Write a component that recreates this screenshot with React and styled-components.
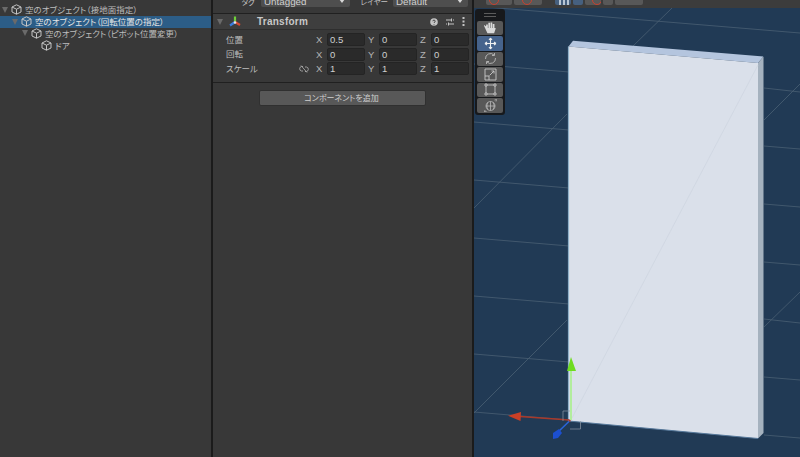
import React from 'react';
import styled, { createGlobalStyle } from 'styled-components';

const Global = createGlobalStyle`
  html, body { margin: 0; padding: 0; background: #383838; }
  body { font-family: "Liberation Sans", "Noto Sans CJK JP", sans-serif; overflow: hidden; }
`;

const Page = styled.div`
  width: 800px;
  height: 457px;
  display: grid;
  grid-template-columns: 211px 2px 259px 2px 326px;
  overflow: hidden;
  background: #383838;
`;

const Divider = styled.div`
  background: #1b1b1b;
`;

/* hierarchy */
const Hierarchy = styled.div`
  padding-top: 4px;
  background: #383838;
`;

const TreeRow = styled.div`
  height: 11.8px;
  display: flex;
  align-items: center;
  gap: 3px;
  padding-left: ${(p) => p.$indent * 10 + 2}px;
  background: ${(p) => (p.$selected ? '#2c5d87' : 'transparent')};
  color: ${(p) => (p.$selected ? '#e4e4e4' : '#bcbcbc')};
  font-size: 8.5px;
  font-feature-settings: "palt";
  white-space: nowrap;
`;

const TreeText = styled.span`
  position: relative;
  top: -0.5px;
`;

const Arrow = styled.span`
  width: 0;
  height: 0;
  border-left: 3px solid transparent;
  border-right: 3px solid transparent;
  border-top: 6px solid ${(p) => (p.$hidden ? 'transparent' : '#6a6a6a')};
  flex: none;
`;

const Cube = () => (
  <svg width="11" height="11" viewBox="0 0 11 11" fill="none" stroke="#c4c4c4" strokeWidth="1" style={{ flex: 'none' }}>
    <path d="M5.5 .8 10 3v5l-4.500 2.200L1 8V3zM1 3l4.500 2.200L10 3M5.500 5.200v5" />
  </svg>
);

/* inspector */
const Inspector = styled.div`
  display: flex;
  flex-direction: column;
  background: #383838;
  color: #c2c2c2;
  font-size: 9px;
`;

const TagRow = styled.div`
  height: 13px;
  flex: none;
  display: flex;
  align-items: flex-end;
  overflow: hidden;
  border-bottom: 1px solid #202020;
  box-sizing: content-box;
`;

const TagLabel = styled.span`
  width: ${(p) => p.$w}px;
  text-align: right;
  padding-right: ${(p) => p.$pad}px;
  box-sizing: border-box;
  flex: none;
  position: relative;
  top: -6px;
  font-size: 7.5px;
  font-feature-settings: "palt";
`;

const TagSelect = styled.div`
  width: ${(p) => p.$w}px;
  height: 14px;
  margin-bottom: 6px;
  flex: none;
  display: flex;
  justify-content: space-between;
  align-items: center;
  padding: 2px 5px 0 3px;
  box-sizing: border-box;
  background: #4e4e4e;
  border-radius: 2px;
  color: #d0d0d0;
  font-size: 9.8px;
`;

const CaretDown = styled.span`
  width: 0;
  height: 0;
  border-left: 3px solid transparent;
  border-right: 3px solid transparent;
  border-top: 4px solid #d8d8d8;
`;

const ComponentHeader = styled.div`
  height: 16px;
  flex: none;
  display: flex;
  align-items: center;
  padding: 0 6px 0 4px;
  box-sizing: border-box;
  background: #3e3e3e;
  border-bottom: 1px solid #2e2e2e;
`;

const HeaderTitle = styled.span`
  margin-left: 15px;
  flex: 1;
  font-size: 10px;
  font-weight: bold;
  letter-spacing: 0.25px;
  color: #c8c8c8;
`;

const HeaderIcons = styled.div`
  display: flex;
  align-items: center;
  gap: 7.5px;
`;

const TransformBody = styled.div`
  height: 53px;
  flex: none;
  padding-top: 3px;
  display: flex;
  flex-direction: column;
  gap: 1.7px;
  box-sizing: border-box;
  border-bottom: 1px solid #202020;
`;

const PropRow = styled.div`
  height: 13px;
  display: flex;
  align-items: center;
  padding-left: 13px;
`;

const PropLabel = styled.span`
  width: 73px;
  flex: none;
  padding-bottom: 2px;
  font-size: 8.5px;
  font-feature-settings: "palt";
  color: #bdbdbd;
`;

const LinkSlot = styled.span`
  width: 17px;
  flex: none;
  display: flex;
  align-items: center;
`;

const Axis = styled.span`
  width: 11px;
  flex: none;
  font-size: 9.5px;
  color: #b4b4b4;
`;

const Field = styled.span`
  width: 38px;
  height: 13px;
  flex: none;
  margin-right: 3px;
  padding-left: 2px;
  box-sizing: border-box;
  display: flex;
  align-items: center;
  background: #2a2a2a;
  border: 1px solid #242424;
  border-radius: 2px;
  font-size: 9.5px;
  color: #cfcfcf;
`;

const AddRow = styled.div`
  display: flex;
  justify-content: center;
  padding-top: 7px;
`;

const AddButton = styled.div`
  width: 167px;
  height: 16px;
  padding: 0 2px 2px 0;
  display: flex;
  align-items: center;
  justify-content: center;
  background: #585858;
  border: 1px solid #303030;
  border-radius: 2px;
  box-sizing: border-box;
  font-size: 8px;
  font-feature-settings: "palt";
  color: #cfcfcf;
`;

/* scene */
const Scene = styled.div`
  display: flex;
  flex-direction: column;
  position: relative;
  overflow: hidden;
`;

const SceneTop = styled.div`
  height: 8px;
  flex: none;
  background: #3c3c3c;
  display: flex;
  align-items: flex-start;
  gap: 2px;
  padding-left: 12px;
`;

const TopButton = styled.div`
  width: ${(p) => p.$w}px;
  height: 5px;
  flex: none;
  margin-left: ${(p) => p.$gap || 0}px;
  padding-left: 2px;
  box-sizing: border-box;
  overflow: hidden;
  background: ${(p) => (p.$on ? '#46607f' : '#585858')};
  border-radius: 0 0 2px 2px;
`;

const RedRing = styled.span`
  display: block;
  width: 8px;
  height: 8px;
  margin: -5px 0 0 ${(p) => p.$left}px;
  border: 1px solid #c9412f;
  border-radius: 50%;
`;

const WhiteBars = styled.span`
  display: block;
  width: 10px;
  height: 5px;
  margin-left: 2px;
  background: repeating-linear-gradient(90deg, #b9c6d4 0 2px, transparent 2px 4px);
`;

const Canvas = styled.div`
  flex: 1;
  background: #213a55;
`;

const ToolStrip = styled.div`
  position: absolute;
  left: 1px;
  top: 9px;
  width: 30px;
  padding: 11.5px 0 2px;
  box-sizing: border-box;
  background: #17191c;
  border-radius: 3px;
  display: flex;
  flex-direction: column;
  align-items: center;
  gap: 1px;
`;

const Grip = styled.span`
  position: absolute;
  top: 4px;
  left: 9px;
  width: 12px;
  height: 4px;
  border-top: 1px solid #5c5c5c;
  border-bottom: 1px solid #5c5c5c;
  box-sizing: border-box;
`;

const Tool = styled.div`
  width: 26.5px;
  height: 14.5px;
  display: flex;
  align-items: center;
  justify-content: center;
  background: ${(p) => (p.$on ? '#46638c' : '#585858')};
  border-radius: 2px;
`;

const tools = [
  { d: 'M3 7.500 3 3.500M5.200 7 5.200 1.800M7.400 7 7.400 1.500M9.600 7.500 9.600 3M3 7 1.500 6 4 11.500H9.500L11 7', w: 1.7, c: '#dadada', fill: '#dadada' },
  { d: 'M6.500 1V12M1 6.500H12M6.500 1 5 3M6.500 1 8 3M6.500 12 5 10M6.500 12 8 10M1 6.500 3 5M1 6.500 3 8M12 6.500 10 5M12 6.500 10 8', w: 1.1, c: '#f0f0f0', fill: 'none' },
  { d: 'M1.500 7A5 5 0 0 1 10 3M11.500 6A5 5 0 0 1 3 10M10.500 1V3.500H8M2.500 12V9.500H5', w: 0.9, c: '#b8b8b8', fill: 'none' },
  { d: 'M1 1H12V12H1ZM1 8H5V12M5.500 7.500 10 3M7.500 3H10V5.500', w: 0.9, c: '#c8c8c8', fill: 'none' },
  { d: 'M3 2H10M3 11H10M2 3V10M11 3V10M1 1H3V3H1ZM10 1H12V3H10ZM1 10H3V12H1ZM10 10H12V12H10Z', w: 0.8, c: '#d0d0d0', fill: 'none' },
  { d: 'M6.500 2.500A4.500 4.500 0 1 0 6.510 2.500M2 7H11M6.500 2.500V11.500M4 3.200C2.500 5.500 2.500 8.500 4 10.800M9 3.200C10.500 5.500 10.500 8.500 9 10.800M10.500 1 12.500 .5 12 2.500M2.500 12.500 .5 13 1 11', w: 0.75, c: '#bcbcbc', fill: 'none' },
];

const gridLines = [
  'M474 6 800 33',
  'M474 64 569 72',
  'M764 88 800 92',
  'M474 122 569 130',
  'M764 146 800 149',
  'M474 180 569 188',
  'M764 204 800 207',
  'M474 238 569 246',
  'M764 262 800 265',
  'M474 296 569 304',
  'M764 319 800 323',
  'M474 354 569 362',
  'M764 377 800 380',
  'M474 412 569 420',
  'M764 435 800 438',
  'M672 8 632 47',
  'M567 114 474 208',
  'M800 84 764 120',
  'M567 320 474 413',
  'M800 292 764 327',
];

const SceneDrawing = () => (
  <svg width="326" height="449" viewBox="474 8 326 449" style={{ display: 'block' }}>
    <g stroke="#4a5f74" strokeWidth="0.8" fill="none">
      {gridLines.map((d) => (
        <path key={d} d={d} />
      ))}
    </g>
    <polygon points="568.500,46.500 573,40.700 763.500,56.500 758,63" fill="#b4c5de" />
    <polygon points="758,63 763.500,56.500 763.500,433 758,438.500" fill="#a5b2bf" />
    <polygon points="568.500,46.500 758,63 758,438.500 568.500,421" fill="#dae0ea" />
    <path d="M568.500 46.500V421" stroke="#8fb0c8" strokeWidth="1.200" />
    <path d="M568.500 421 758 438.500" stroke="#56789a" strokeWidth="1.200" />
    <path d="M758 65 572 418" stroke="#cdd4e0" strokeWidth="0.7" />
    <path d="M571 420V370" stroke="#a8f08a" strokeWidth="1.600" />
    <polygon points="571,357 576,371 567,371" fill="#6fdc20" />
    <path d="M569.500 420 520 416.500" stroke="#a8392a" strokeWidth="1.500" />
    <polygon points="508,415.700 521,412 520.500,421" fill="#c93f26" />
    <path d="M569.500 421 557 433" stroke="#2a64d8" strokeWidth="1.600" />
    <polygon points="553,439 553,433 559,429 562,433 558,438" fill="#1c4fd0" />
    <path d="M563 421V411H570M580.500 421V429H570" stroke="#8e9aa8" strokeWidth="0.7" fill="none" />
    <circle cx="569.700" cy="420.700" r="1" fill="#a8392a" />
  </svg>
);

const tree = [
  { text: '空のオブジェクト（接地面指定）', indent: 0, arrow: true },
  { text: '空のオブジェクト（回転位置の指定）', indent: 1, arrow: true, selected: true },
  { text: '空のオブジェクト（ピボット位置変更）', indent: 2, arrow: true },
  { text: 'ドア', indent: 3 },
];

const props = [
  { label: '位置', v: ['0.5', '0', '0'] },
  { label: '回転', v: ['0', '0', '0'] },
  { label: 'スケール', v: ['1', '1', '1'], link: true },
];

export default function App() {
  return (
    <Page>
      <Global />
      <Hierarchy>
        {tree.map((row) => (
          <TreeRow key={row.text} $indent={row.indent} $selected={row.selected}>
            <Arrow $hidden={!row.arrow} />
            <Cube />
            <TreeText>{row.text}</TreeText>
          </TreeRow>
        ))}
      </Hierarchy>
      <Divider />
      <Inspector>
        <TagRow>
          <TagLabel $w={48} $pad={6}>タグ</TagLabel>
          <TagSelect $w={89}>Untagged<CaretDown /></TagSelect>
          <TagLabel $w={43} $pad={5}>レイヤー</TagLabel>
          <TagSelect $w={75}>Default<CaretDown /></TagSelect>
        </TagRow>
        <ComponentHeader>
          <Arrow />
          <svg width="14" height="14" viewBox="0 0 14 14" style={{ marginLeft: 5 }}>
            <path d="M7 7V1.500" stroke="#6fd13a" strokeWidth="2.200" />
            <path d="M7 7 2 10.500" stroke="#3a7de0" strokeWidth="2.200" />
            <path d="M7 7l5 3" stroke="#d9482f" strokeWidth="2.200" />
            <circle cx="7" cy="7.500" r="1.300" fill="#e8e8e8" />
          </svg>
          <HeaderTitle>Transform</HeaderTitle>
          <HeaderIcons>
            <svg width="8" height="8" viewBox="0 0 8 8">
              <circle cx="4" cy="4" r="3.800" fill="#c4c4c4" />
              <path d="M2.800 3.200c0-1.500 2.400-1.500 2.400 0 0 1-1.200 1-1.200 1.800M4 6v.6" stroke="#3e3e3e" fill="none" />
            </svg>
            <svg width="8" height="8" viewBox="0 0 8 8" stroke="#c4c4c4" fill="none">
              <path d="M0 2h5M7 2h1M0 6h1M3 6h5M5.500 .5v3M2.500 4.500v3" />
            </svg>
            <svg width="5" height="9" viewBox="0 0 5 9" fill="#c4c4c4">
              <rect x="1.500" y="0" width="2" height="2" />
              <rect x="1.500" y="3.500" width="2" height="2" />
              <rect x="1.500" y="7" width="2" height="2" />
            </svg>
          </HeaderIcons>
        </ComponentHeader>
        <TransformBody>
          {props.map((p) => (
            <PropRow key={p.label}>
              <PropLabel>{p.label}</PropLabel>
              <LinkSlot>
                {p.link && (
                  <svg width="10" height="8" viewBox="0 0 10 8" fill="none" stroke="#a8a8a8" strokeWidth="0.9">
                    <path d="M4 1.500H2.500a2.300 2.300 0 0 0 0 4.500H4M6 2h1.500a2.300 2.300 0 0 1 0 4.500H6M2 .5l6 7" />
                  </svg>
                )}
              </LinkSlot>
              {['X', 'Y', 'Z'].map((axis, i) => (
                <React.Fragment key={axis}>
                  <Axis>{axis}</Axis>
                  <Field>{p.v[i]}</Field>
                </React.Fragment>
              ))}
            </PropRow>
          ))}
        </TransformBody>
        <AddRow>
          <AddButton>コンポーネントを追加</AddButton>
        </AddRow>
      </Inspector>
      <Divider />
      <Scene>
        <SceneTop>
          <TopButton $w={26}><RedRing $left={1} /></TopButton>
          <TopButton $w={28}><RedRing $left={6} /></TopButton>
          <TopButton $w={16} $gap={11} $on><WhiteBars /></TopButton>
          <TopButton $w={10} $on />
          <TopButton $w={16}><RedRing $left={5} /></TopButton>
          <TopButton $w={10} />
          <TopButton $w={28} />
        </SceneTop>
        <Canvas>
          <SceneDrawing />
        </Canvas>
        <ToolStrip>
          <Grip />
          {tools.map((t, i) => (
            <Tool key={t.d} $on={i === 1}>
              <svg width="13" height="13" viewBox="0 0 13 13" fill={t.fill} stroke={t.c} strokeWidth={t.w}>
                <path d={t.d} />
              </svg>
            </Tool>
          ))}
        </ToolStrip>
      </Scene>
    </Page>
  );
}
